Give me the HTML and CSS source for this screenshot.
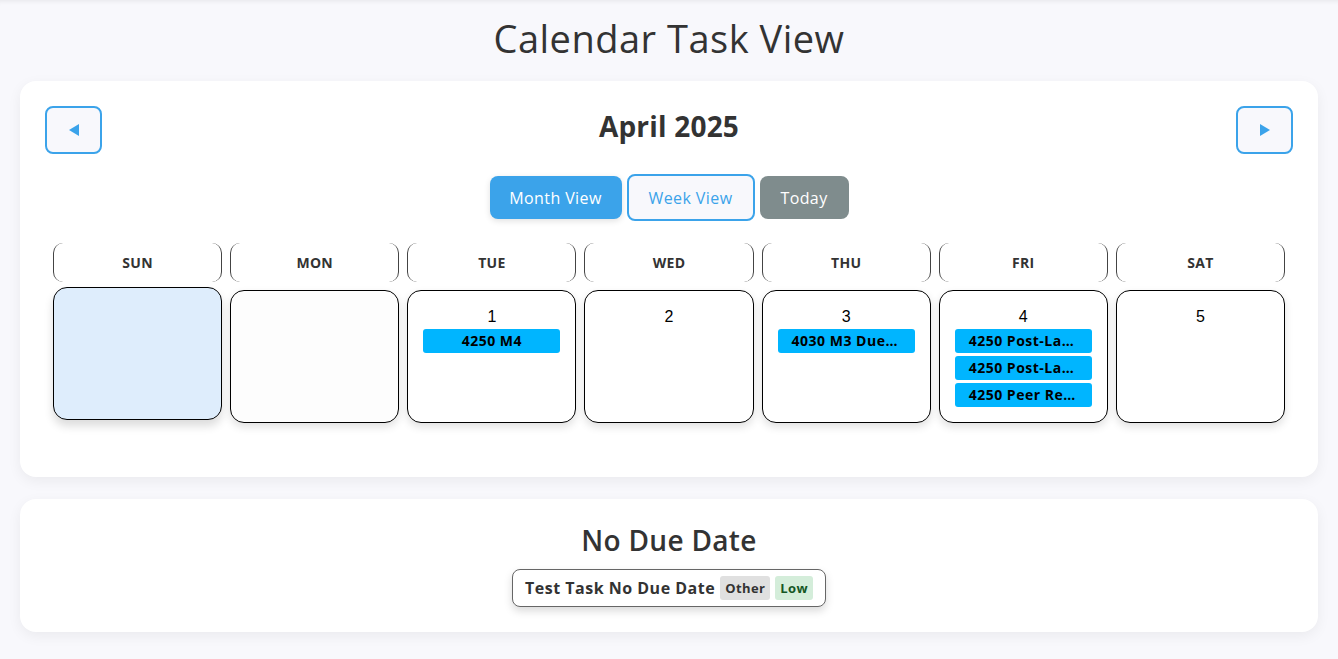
FILE: index.html
```html
<!DOCTYPE html>
<html lang="en">
<head>
<meta charset="utf-8">
<title>Calendar Task View</title>
<link rel="stylesheet" href="styles.css">
</head>
<body>
<div class="page">
  <h1 class="page-title">Calendar Task View</h1>

  <section class="card calendar">
    <div class="cal-head">
      <button class="nav-btn" aria-label="Previous month">
        <svg width="12" height="14" viewBox="0 0 12 14"><path d="M11 1 L1 7 L11 13 Z" fill="#3ba3ea"/></svg>
      </button>
      <h2 class="month-title">April 2025</h2>
      <button class="nav-btn" aria-label="Next month">
        <svg width="12" height="14" viewBox="0 0 12 14"><path d="M1 1 L11 7 L1 13 Z" fill="#3ba3ea"/></svg>
      </button>
    </div>

    <div class="view-switch">
      <button class="view-btn active">Month View</button>
      <button class="view-btn outline">Week View</button>
      <button class="view-btn today">Today</button>
    </div>

    <div class="grid">
      <div class="dow">SUN</div>
      <div class="dow">MON</div>
      <div class="dow">TUE</div>
      <div class="dow">WED</div>
      <div class="dow">THU</div>
      <div class="dow">FRI</div>
      <div class="dow">SAT</div>

      <div class="day empty hovered"></div>
      <div class="day empty"></div>
      <div class="day">
        <div class="num">1</div>
        <div class="task">4250 M4</div>
      </div>
      <div class="day">
        <div class="num">2</div>
      </div>
      <div class="day">
        <div class="num">3</div>
        <div class="task">4030 M3 Due Date</div>
      </div>
      <div class="day">
        <div class="num">4</div>
        <div class="task">4250 Post-Lab Report</div>
        <div class="task">4250 Post-Lab Quiz</div>
        <div class="task">4250 Peer Review</div>
      </div>
      <div class="day">
        <div class="num">5</div>
      </div>
    </div>
  </section>

  <section class="card nodue">
    <h2 class="nodue-title">No Due Date</h2>
    <div class="nodue-list">
      <div class="nodue-task">
        <span class="nodue-name">Test Task No Due Date</span>
        <span class="tag tag-other">Other</span>
        <span class="tag tag-low">Low</span>
      </div>
    </div>
  </section>
</div>
</body>
</html>
```

FILE: styles.css
```css
* { box-sizing: border-box; }

html, body {
  margin: 0;
  padding: 0;
  background: #f8f8fc;
}

body {
  font-family: "Open Sans", "Noto Sans", sans-serif;
  color: #333;
  box-shadow: inset 0 5px 5px -4px rgba(0,0,0,0.08);
  min-height: 659px;
}

.page {
  padding: 0 20px 20px;
}

.page-title {
  margin: 0;
  padding: 15px 0 19px;
  text-align: center;
  font-size: 38px;
  letter-spacing: 0.5px;
  font-weight: 400;
  line-height: 47px;
  color: #333;
}

.card {
  background: #fff;
  border-radius: 16px;
  box-shadow: 0 4px 14px rgba(0,0,0,0.06);
}

.calendar {
  padding: 25px 25px 54px;
}

.cal-head {
  display: flex;
  align-items: center;
  justify-content: space-between;
}

.nav-btn {
  width: 57px;
  height: 48px;
  border: 2px solid #3ba3ea;
  border-radius: 8px;
  background: #f8f8fc;
  display: flex;
  align-items: center;
  justify-content: center;
  padding: 0;
}

.month-title {
  margin: 0 0 8px;
  font-size: 28px;
  letter-spacing: 0.2px;
  line-height: 36px;
  font-weight: 700;
  color: #333;
}

.view-switch {
  display: flex;
  justify-content: center;
  align-items: center;
  gap: 5px;
  margin-top: 20px;
}

.view-btn {
  font-family: inherit;
  font-size: 16px;
  letter-spacing: 0.4px;
  height: 43px;
  padding: 0;
  border: none;
  border-radius: 8px;
  color: #fff;
}

.view-btn.active {
  background: #3ba3ea;
  box-shadow: 0 2px 6px rgba(0,0,0,0.12);
  width: 132px;
}

.view-btn.outline {
  background: #f8f8fc;
  border: 2px solid #3ba3ea;
  color: #3ba3ea;
  height: 47px;
  width: 128px;
}

.view-btn.today {
  background: #7f8c8d;
  width: 89px;
}

.grid {
  display: grid;
  grid-template-columns: repeat(7, 1fr);
  column-gap: 8px;
  row-gap: 8px;
  padding: 0 8px;
  margin-top: 22px;
}

.dow {
  height: 39px;
  display: flex;
  align-items: center;
  justify-content: center;
  font-size: 14px;
  letter-spacing: 0.3px;
  font-weight: 700;
  color: #333;
  border-left: 1px solid #444;
  border-right: 1px solid #444;
  border-radius: 10px;
  background: #fff;
}

.day {
  height: 133px;
  border: 1px solid #000;
  border-radius: 14px;
  background: #fff;
  box-shadow: 0 4px 8px rgba(0,0,0,0.12);
  padding: 15px 15px 10px;
  display: flex;
  flex-direction: column;
  gap: 3px;
  min-width: 0;
}

.day.empty {
  background: #fdfdfd;
}

.day.hovered {
  background: #deedfc;
  transform: translateY(-3px);
  box-shadow: 0 6px 10px rgba(0,0,0,0.14);
}

.num {
  text-align: center;
  font-family: "Liberation Sans", Arial, sans-serif;
  font-size: 16px;
  line-height: 22px;
  color: #000;
  margin-bottom: -2px;
}

.task {
  background: #00b5ff;
  color: #000;
  font-size: 14px;
  letter-spacing: 0.5px;
  font-weight: 700;
  line-height: 24px;
  height: 24px;
  border-radius: 3px;
  text-align: center;
  padding: 0 14px;
  white-space: nowrap;
  overflow: hidden;
  text-overflow: ellipsis;
}

.nodue {
  margin-top: 22px;
  padding: 20px 25px 25px;
  text-align: center;
}

.nodue-title {
  margin: 0;
  font-size: 28px;
  letter-spacing: 0.3px;
  line-height: 42px;
  font-weight: 600;
  color: #333;
}

.nodue-list {
  display: flex;
  justify-content: center;
  margin-top: 8px;
}

.nodue-task {
  display: flex;
  align-items: center;
  gap: 5px;
  height: 38px;
  padding: 0 12px;
  border: 1px solid #666;
  border-radius: 8px;
  background: #fff;
  box-shadow: 0 4px 8px rgba(0,0,0,0.15);
}

.nodue-name {
  font-size: 16px;
  letter-spacing: 0.5px;
  font-weight: 700;
  color: #333;
}

.tag {
  font-size: 13px;
  letter-spacing: 0.4px;
  font-weight: 700;
  padding: 0 5px;
  line-height: 24px;
  border-radius: 3px;
}

.tag-other {
  background: #e0e0e0;
  color: #333;
}

.tag-low {
  background: #d4edda;
  color: #155724;
}
```
